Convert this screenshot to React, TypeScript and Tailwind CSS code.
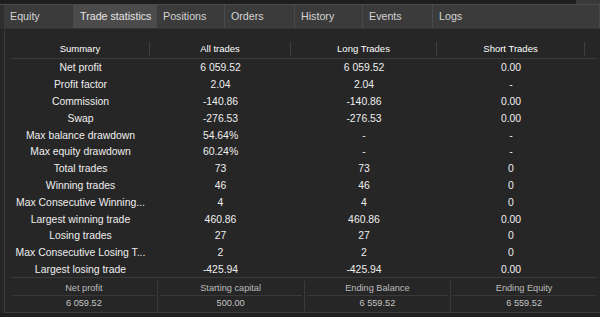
import React from "react";

const tabs = [
  { label: "Equity", w: "w-[70px]" },
  { label: "Trade statistics", w: "w-[83px]", active: true },
  { label: "Positions", w: "w-[68px]" },
  { label: "Orders", w: "w-[70px]" },
  { label: "History", w: "w-[68px]" },
  { label: "Events", w: "w-[70px]" },
  { label: "Logs", w: "flex-1" },
];

const rows: [string, string, string, string][] = [
  ["Net profit", "6 059.52", "6 059.52", "0.00"],
  ["Profit factor", "2.04", "2.04", "-"],
  ["Commission", "-140.86", "-140.86", "0.00"],
  ["Swap", "-276.53", "-276.53", "0.00"],
  ["Max balance drawdown", "54.64%", "-", "-"],
  ["Max equity drawdown", "60.24%", "-", "-"],
  ["Total trades", "73", "73", "0"],
  ["Winning trades", "46", "46", "0"],
  ["Max Consecutive Winning...", "4", "4", "0"],
  ["Largest winning trade", "460.86", "460.86", "0.00"],
  ["Losing trades", "27", "27", "0"],
  ["Max Consecutive Losing T...", "2", "2", "0"],
  ["Largest losing trade", "-425.94", "-425.94", "0.00"],
];

const colW = ["w-[139px]", "w-[141px]", "w-[146px]", "w-[148px]"];

const bottom = [
  ["Net profit", "6 059.52"],
  ["Starting capital", "500.00"],
  ["Ending Balance", "6 559.52"],
  ["Ending Equity", "6 559.52"],
];

export default function App() {
  return (
    <div
      className="w-[600px] h-[317px] bg-[#262626] flex flex-col overflow-hidden text-[#ececec]"
      style={{ fontFamily: '"Liberation Sans", Arial, sans-serif' }}
    >
      <div className="h-[4px] flex bg-[#1e1e1e]">
        <div className="flex-1" />
        <div className="w-[24px] bg-[#3a3a3a]" />
      </div>
      <div className="h-[25px] flex bg-[#2e2e2e] border-t border-[#4a4a4a]">
        <div className="w-[4px]" />
        <div className="flex-1 flex bg-[#3b3b3b] border-b border-[#333333]">
          {tabs.map((t) => (
            <div
              key={t.label}
              className={`${t.w} h-full flex items-center pl-[6px] text-[10.7px] border-r border-[#4a4a4a] ${
                t.active ? "bg-[#4b4b4b] text-[#e6e6e6]" : "text-[#d4d4d4]"
              }`}
            >
              {t.label}
            </div>
          ))}
        </div>
      </div>
      <div className="flex-1 flex flex-col ml-[4px] border-l border-b border-[#3c3c3c] pl-[6px] pr-[3px]">
        <div className="h-[30px] flex items-end border-b border-[#3a3a3a]">
          {["Summary", "All trades", "Long Trades", "Short Trades"].map((h, i) => (
            <div
              key={h}
              className={`${colW[i]} h-[14px] mb-[2px] flex items-center justify-center text-[9.5px] font-medium text-white border-r border-[#3f3f3f] pt-[1px]`}
            >
              {h}
            </div>
          ))}
        </div>
        <div className="flex flex-col border-b border-[#3a3a3a]">
          {rows.map((r) => (
            <div key={r[0]} className="h-[16.8px] flex items-center text-[10.4px] text-[#eeeeee] pt-[2px]">
              {r.map((c, i) => (
                <div key={i} className={`${colW[i]} text-center whitespace-nowrap`}>
                  {c}
                </div>
              ))}
            </div>
          ))}
        </div>
        <div className="flex-1 flex pt-[3px] pb-[1px]">
          {bottom.map((b, i) => (
            <div
              key={b[0]}
              className={`flex-1 flex flex-col px-[2px] ${i < 3 ? "border-r border-[#3a3a3a]" : ""}`}
            >
              <div className="h-[15px] flex items-center justify-center text-[9.2px] text-[#bdbdbd] border-b border-[#3a3a3a] pt-[1px]">
                {b[0]}
              </div>
              <div className="flex-1 flex items-center justify-center text-[9.2px] text-[#c4c4c4] pt-[1px]">
                {b[1]}
              </div>
            </div>
          ))}
        </div>
      </div>
      <div className="h-[4px] bg-[#1f1f1f]" />
    </div>
  );
}
